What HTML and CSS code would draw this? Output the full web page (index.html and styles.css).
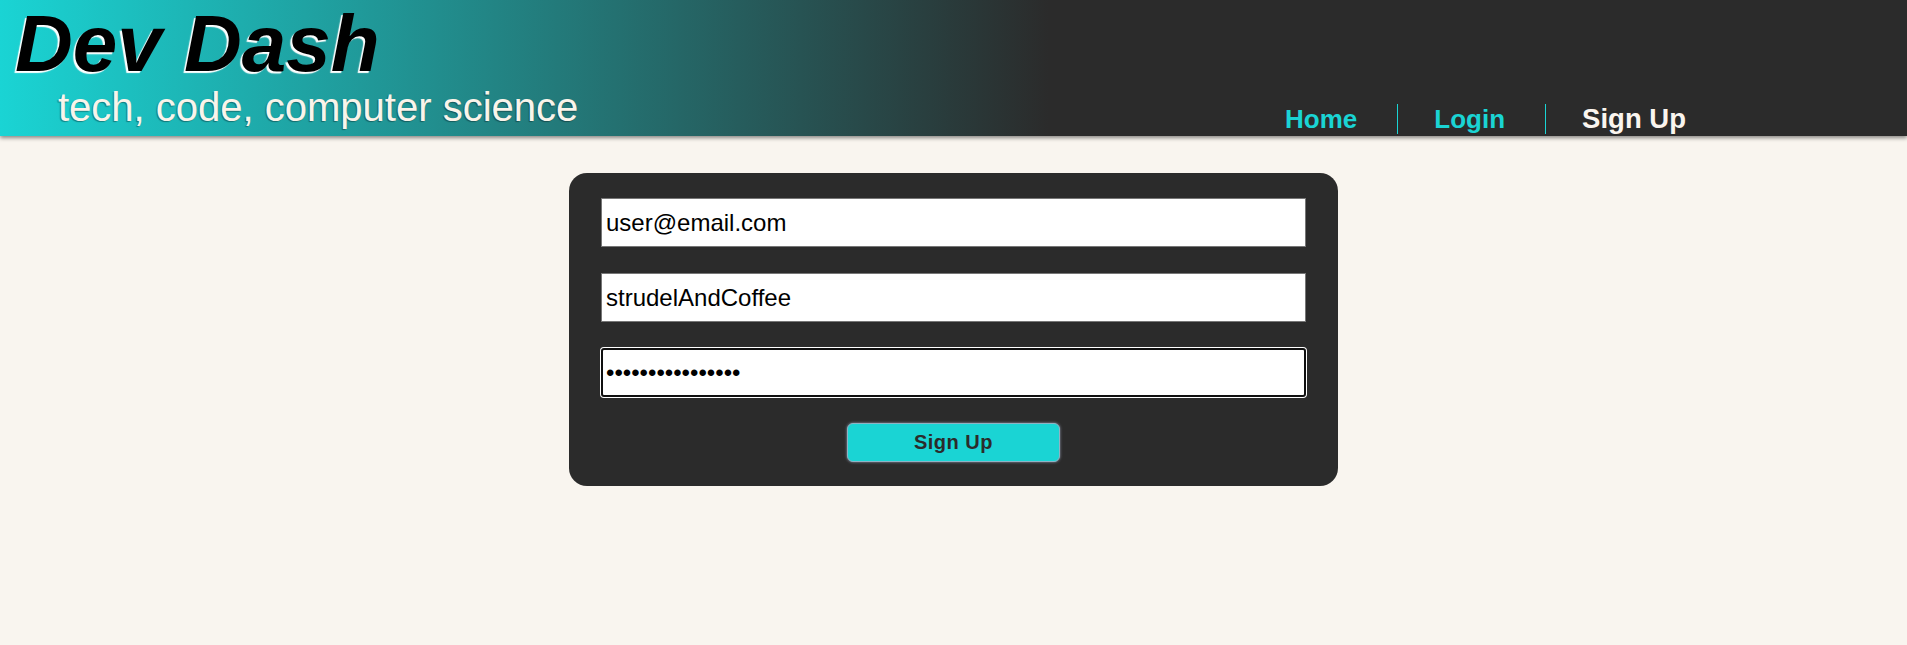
FILE: index.html
```html
<!DOCTYPE html>
<html lang="en">
<head>
<meta charset="utf-8">
<title>Dev Dash - Sign Up</title>
<link rel="stylesheet" href="styles.css">
</head>
<body>
<header class="site-header">
  <div class="brand">
    <h1 class="brand-title">Dev Dash</h1>
    <p class="brand-tagline">tech, code, computer science</p>
  </div>
  <nav class="site-nav">
    <ul class="nav-list">
      <li class="nav-item"><a class="nav-link" href="#">Home</a></li>
      <li class="nav-item"><a class="nav-link" href="#">Login</a></li>
      <li class="nav-item"><a class="nav-link nav-link-active" href="#">Sign Up</a></li>
    </ul>
  </nav>
</header>
<main class="page">
  <form class="signup-card">
    <input class="field" type="email" value="user@email.com">
    <input class="field" type="text" value="strudelAndCoffee">
    <input class="field field-focused" type="password" value="strudelAndCoffe1">
    <button class="submit-btn" type="button">Sign Up</button>
  </form>
</main>
</body>
</html>
```

FILE: styles.css
```css
html, body {
  margin: 0;
  padding: 0;
}

body {
  background: #f9f5ef;
  font-family: "Liberation Sans", Arial, sans-serif;
  height: 645px;
  overflow: hidden;
}

.site-header {
  display: flex;
  align-items: flex-end;
  height: 136px;
  background: linear-gradient(to right, #1ad4d4 0%, #2b2b2b 55%, #2b2b2b 100%);
  box-shadow: 0 2px 4px rgba(0, 0, 0, 0.45);
  position: relative;
  z-index: 1;
}

.brand {
  align-self: flex-start;
  display: flex;
  flex-direction: column;
  padding-top: 4px;
}

.brand-title {
  margin: 0;
  padding-left: 15px;
  font-size: 80px;
  line-height: 80px;
  font-weight: bold;
  font-style: italic;
  color: #000;
  text-shadow: -2px 2px 1px #fff;
}

.brand-tagline {
  margin: 3px 0 0 0;
  padding-left: 58px;
  font-size: 40px;
  line-height: 40px;
  color: #faf4ea;
  text-shadow: -1px 1px 1px rgba(0, 0, 0, 0.35);
}

.site-nav {
  margin-left: auto;
  margin-right: 181px;
  margin-bottom: 2px;
}

.nav-list {
  display: flex;
  list-style: none;
  margin: 0;
  padding: 0;
}

.nav-item {
  padding: 0 40px 0 36px;
  height: 30px;
}

.nav-item + .nav-item {
  border-left: 1px solid #1ad4d4;
}

.nav-link {
  display: block;
  font-size: 26px;
  line-height: 30px;
  font-weight: bold;
  color: #1ad4d4;
  text-decoration: none;
}

.nav-link-active {
  font-size: 27.5px;
  color: #faf5ef;
}

.page {
  padding-top: 37px;
}

.signup-card {
  width: 769px;
  box-sizing: border-box;
  margin: 0 auto;
  padding: 25px 32px 24px;
  background: #2b2b2b;
  border-radius: 18px;
  display: flex;
  flex-direction: column;
  align-items: center;
}

.field {
  display: block;
  width: 100%;
  height: 49px;
  box-sizing: border-box;
  margin: 0 0 26px 0;
  padding: 0 4px;
  border: 1px solid #767676;
  background: #fff;
  font-family: "Liberation Sans", Arial, sans-serif;
  font-size: 24px;
  color: #000;
  outline: none;
}

.field-focused {
  border: 2px solid #101010;
  border-radius: 3px;
  padding: 0 3px;
  box-shadow: 0 0 0 1px #fff;
}

.submit-btn {
  width: 213px;
  height: 39px;
  margin: 0;
  border: 1px solid #8fb3c4;
  border-radius: 6px;
  background: #1ad4d4;
  box-shadow: 0 0 3px rgba(190, 200, 230, 0.7);
  font-family: "Liberation Sans", Arial, sans-serif;
  font-size: 20px;
  font-weight: bold;
  letter-spacing: 0.5px;
  color: #2b2b2b;
  cursor: pointer;
}
```
